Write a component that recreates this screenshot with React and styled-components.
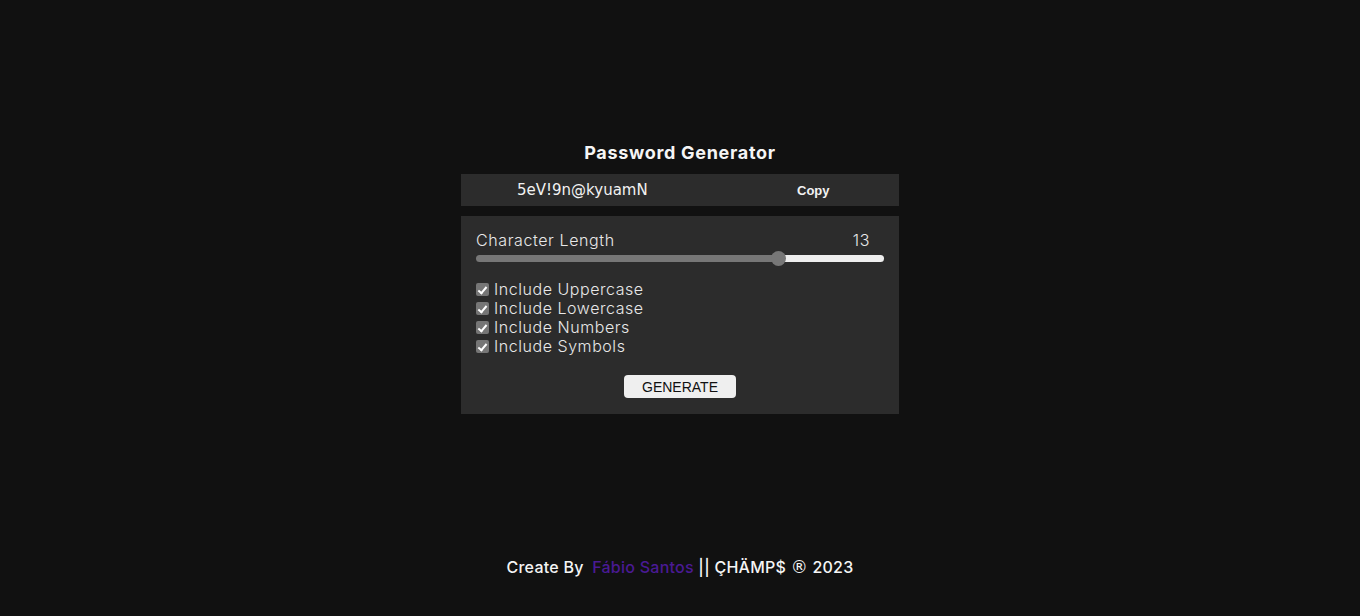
import { useState } from "react";
import styled, { createGlobalStyle } from "styled-components";

const GlobalStyle = createGlobalStyle`
  * { box-sizing: border-box; }
  body {
    margin: 0;
    background: #111111;
    color: #ffffff;
    font-family: Inter, "Noto Sans", sans-serif;
  }
`;

const Page = styled.div`
  min-height: 616px;
  display: flex;
  flex-direction: column;
  align-items: center;
  padding-top: 141px;
`;

const Wrapper = styled.div`
  width: 438px;
  display: flex;
  flex-direction: column;
`;

const Title = styled.h1`
  margin: 0 0 10px;
  text-align: center;
  font-size: 18px;
  line-height: 23px;
  font-weight: 700;
  letter-spacing: 0.7px;
  color: #f5f5f5;
`;

const Result = styled.div`
  height: 32px;
  background: #2c2c2c;
  display: flex;
  align-items: center;
  padding-left: 56px;
  margin-bottom: 10px;
`;

const PasswordText = styled.span`
  flex: 1;
  font-family: "DejaVu Sans", Verdana, sans-serif;
  font-size: 15px;
  color: #f2f2f2;
`;

const CopyButton = styled.button`
  background: none;
  border: none;
  color: #f2f2f2;
  font-family: "Liberation Sans", Arial, sans-serif;
  font-weight: 700;
  font-size: 13px;
  padding: 0;
  width: 30px;
  margin-right: 72px;
  cursor: pointer;
`;

const Panel = styled.div`
  background: #2c2c2c;
  padding: 14px 15px 16px;
  display: flex;
  flex-direction: column;
`;

const LengthRow = styled.div`
  display: flex;
  justify-content: space-between;
  align-items: center;
  font-size: 16px;
  font-weight: 300;
  letter-spacing: 0.6px;
  color: #e8e8e8;
  padding-right: 14px;
  line-height: 20px;
`;

const Range = styled.input`
  -webkit-appearance: none;
  appearance: none;
  width: 100%;
  height: 7px;
  margin: 5px 0 0;
  border-radius: 4px;
  outline: none;
  background: ${(p) =>
    `linear-gradient(to right, #777777 ${p.$fill}%, #eeeeee ${p.$fill}%)`};
  &::-webkit-slider-thumb {
    -webkit-appearance: none;
    width: 15px;
    height: 15px;
    border-radius: 50%;
    background: #777777;
    border: none;
  }
`;

const Options = styled.div`
  margin-top: 18px;
  display: flex;
  flex-direction: column;
`;

const Option = styled.label`
  display: flex;
  align-items: center;
  gap: 5px;
  font-size: 16px;
  font-weight: 300;
  letter-spacing: 0.55px;
  line-height: 19px;
  color: #e8e8e8;
`;

const Check = styled.input`
  -webkit-appearance: none;
  appearance: none;
  width: 13px;
  height: 13px;
  margin: 0;
  border-radius: 2px;
  background: #767676;
  position: relative;
  flex-shrink: 0;
  &:checked::after {
    content: "";
    position: absolute;
    left: 4px;
    top: 1.5px;
    width: 3px;
    height: 7px;
    border: solid #ffffff;
    border-width: 0 2px 2px 0;
    transform: rotate(40deg);
  }
`;

const GenerateButton = styled.button`
  align-self: center;
  margin-top: 19px;
  width: 112px;
  height: 23px;
  border: none;
  border-radius: 4px;
  background: #efefef;
  color: #111111;
  font-family: "Liberation Sans", Arial, sans-serif;
  font-size: 14px;
  cursor: pointer;
`;

const Footer = styled.footer`
  margin-top: 143px;
  font-size: 16px;
  font-weight: 500;
  letter-spacing: 0.25px;
  color: #f5f5f5;
`;

const Author = styled.span`
  color: #4a1a94;
  margin-left: 4px;
`;

const Registered = styled.span`
  font-family: "DejaVu Sans", sans-serif;
  font-size: 17px;
  font-weight: 400;
`;

const options = [
  "Include Uppercase",
  "Include Lowercase",
  "Include Numbers",
  "Include Symbols",
];

export default function App() {
  const [length, setLength] = useState(13);
  const min = 1;
  const max = 17;
  const fill = ((length - min) / (max - min)) * 100;

  return (
    <Page>
      <GlobalStyle />
      <Wrapper>
        <Title>Password Generator</Title>
        <Result>
          <PasswordText>5eV!9n@kyuamN</PasswordText>
          <CopyButton>Copy</CopyButton>
        </Result>
        <Panel>
          <LengthRow>
            <span>Character Length</span>
            <span>{length}</span>
          </LengthRow>
          <Range
            type="range"
            min={min}
            max={max}
            value={length}
            $fill={fill}
            onChange={(e) => setLength(Number(e.target.value))}
          />
          <Options>
            {options.map((o) => (
              <Option key={o}>
                <Check type="checkbox" defaultChecked />
                {o}
              </Option>
            ))}
          </Options>
          <GenerateButton>GENERATE</GenerateButton>
        </Panel>
      </Wrapper>
      <Footer>
        Create By <Author>Fábio Santos</Author> || ÇHÄMP$ <Registered>®</Registered> 2023
      </Footer>
    </Page>
  );
}
